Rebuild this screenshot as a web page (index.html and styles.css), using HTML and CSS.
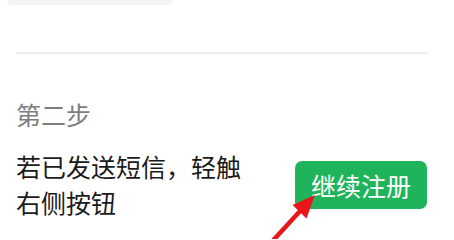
FILE: index.html
```html
<!DOCTYPE html>
<html lang="zh-CN">
<head>
<meta charset="utf-8">
<title>第二步</title>
<link rel="stylesheet" href="styles.css">
</head>
<body>
<div class="page">
  <div class="top-card"></div>
  <div class="divider"></div>
  <div class="step">
    <div class="step-title">第二步</div>
    <div class="step-row">
      <div class="step-text">若已发送短信，轻触<br>右侧按钮</div>
      <div class="btn">继续注册</div>
    </div>
  </div>
  <svg class="arrow" width="454" height="239" viewBox="0 0 454 239">
    <line x1="301" y1="210" x2="268" y2="246" stroke="#e8151b" stroke-width="4.5" stroke-linecap="butt"/>
    <polygon points="315,195 292.5,205 306.5,218.5" fill="#e8151b"/>
  </svg>
</div>
</body>
</html>
```
FILE: styles.css
```css
html, body {
  margin: 0;
  padding: 0;
  background: #ffffff;
}
body {
  font-family: "Noto Sans CJK SC", "Noto Sans", sans-serif;
  width: 454px;
  height: 239px;
  overflow: hidden;
}
.page {
  position: relative;
  width: 454px;
  height: 239px;
}
.top-card {
  margin-left: 7px;
  width: 166px;
  height: 5px;
  background: #f4f4f4;
  border-radius: 0 0 8px 8px;
}
.divider {
  margin: 47px 26px 0 16px;
  height: 2px;
  background: #eeeeee;
}
.step {
  padding: 0 27px 0 16px;
}
.step-title {
  margin-top: 44px;
  font-size: 25px;
  line-height: 32px;
  color: #7d7d7d;
}
.step-row {
  margin-top: 18px;
  display: flex;
  align-items: center;
  justify-content: space-between;
}
.step-text {
  font-size: 25px;
  line-height: 36px;
  color: #1b1b1b;
}
.btn {
  width: 132px;
  height: 48px;
  box-sizing: border-box;
  display: flex;
  align-items: center;
  justify-content: center;
  background: #1fb45b;
  color: #ffffff;
  border-radius: 7px;
  font-size: 25px;
  margin-top: 2px;
}
.arrow {
  position: absolute;
  left: 0;
  top: 0;
}
```
